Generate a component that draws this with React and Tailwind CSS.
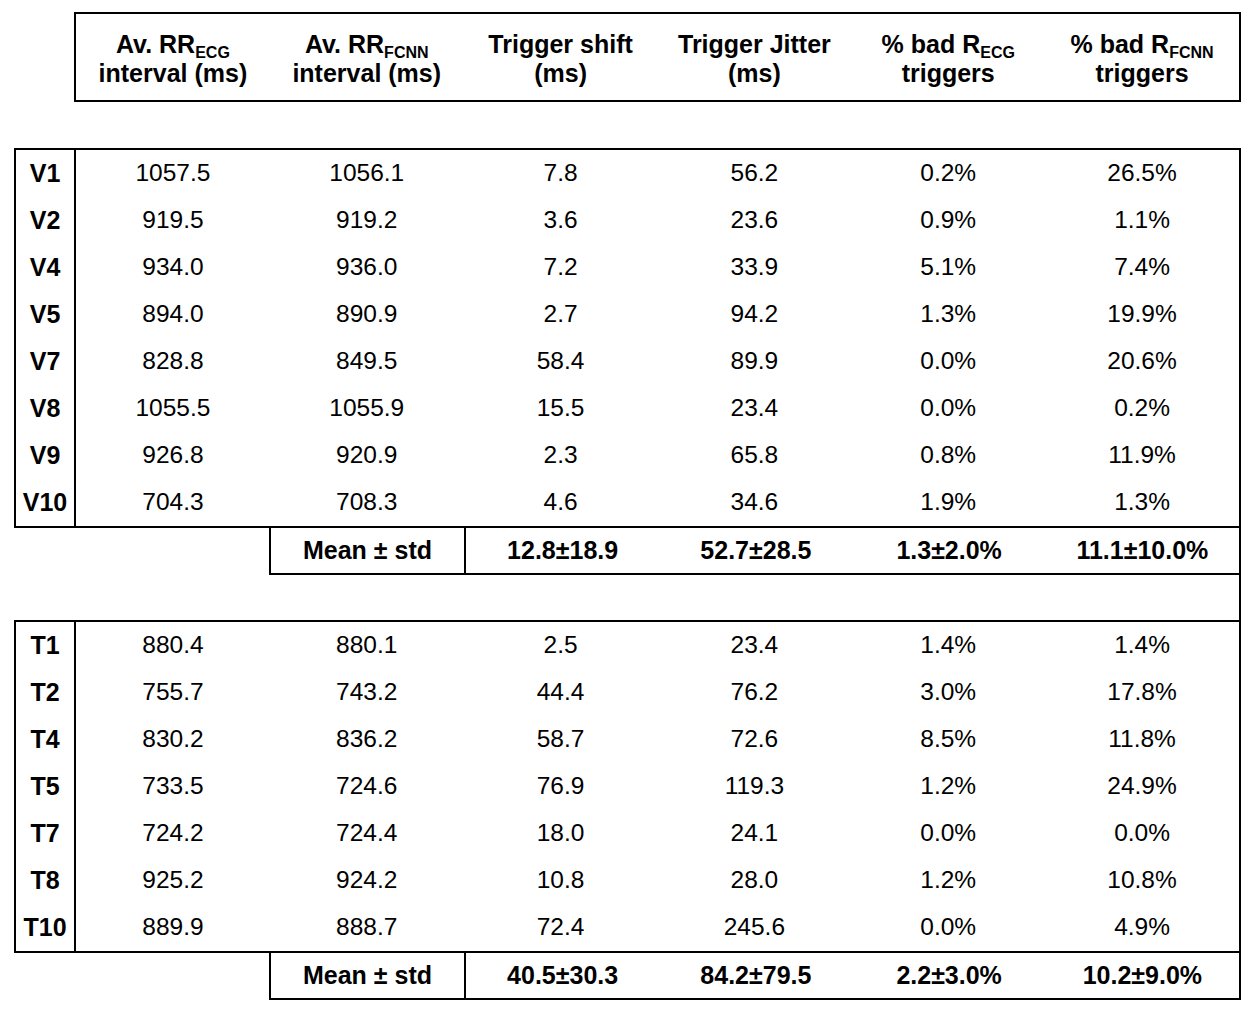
import React from "react";

const vRows = [
  ["V1", "1057.5", "1056.1", "7.8", "56.2", "0.2%", "26.5%"],
  ["V2", "919.5", "919.2", "3.6", "23.6", "0.9%", "1.1%"],
  ["V4", "934.0", "936.0", "7.2", "33.9", "5.1%", "7.4%"],
  ["V5", "894.0", "890.9", "2.7", "94.2", "1.3%", "19.9%"],
  ["V7", "828.8", "849.5", "58.4", "89.9", "0.0%", "20.6%"],
  ["V8", "1055.5", "1055.9", "15.5", "23.4", "0.0%", "0.2%"],
  ["V9", "926.8", "920.9", "2.3", "65.8", "0.8%", "11.9%"],
  ["V10", "704.3", "708.3", "4.6", "34.6", "1.9%", "1.3%"],
];

const tRows = [
  ["T1", "880.4", "880.1", "2.5", "23.4", "1.4%", "1.4%"],
  ["T2", "755.7", "743.2", "44.4", "76.2", "3.0%", "17.8%"],
  ["T4", "830.2", "836.2", "58.7", "72.6", "8.5%", "11.8%"],
  ["T5", "733.5", "724.6", "76.9", "119.3", "1.2%", "24.9%"],
  ["T7", "724.2", "724.4", "18.0", "24.1", "0.0%", "0.0%"],
  ["T8", "925.2", "924.2", "10.8", "28.0", "1.2%", "10.8%"],
  ["T10", "889.9", "888.7", "72.4", "245.6", "0.0%", "4.9%"],
];

function Sub({ children }) {
  return <span className="relative top-[5px] text-[16px] leading-none">{children}</span>;
}

function HeaderCell({ l1, l2 }) {
  return (
    <div className="flex flex-1 flex-col items-center justify-center pt-[4px] text-[25px] font-bold leading-[29.5px]">
      <div>{l1}</div>
      <div>{l2}</div>
    </div>
  );
}

function DataTable({ rows }) {
  return (
    <div className="ml-[14px] w-[1227px] border-2 border-black">
      {rows.map((r) => (
        <div key={r[0]} className="flex h-[47px] items-center">
          <div className="flex h-full w-[60px] items-center justify-center border-r-2 border-black text-[25px] font-bold">
            {r[0]}
          </div>
          {r.slice(1).map((v, i) => (
            <div key={i} className="flex flex-1 items-center justify-center text-[24.5px]">
              {v}
            </div>
          ))}
        </div>
      ))}
    </div>
  );
}

function MeanRow({ vals }) {
  return (
    <div className="ml-[14px] flex h-[47px] w-[1227px]">
      <div className="w-[255px]" />
      <div className="flex flex-1 border-x-2 border-b-2 border-black text-[25px] font-bold">
        <div className="flex w-[195px] items-center justify-center border-r-2 border-black">
          Mean ± std
        </div>
        {vals.map((v, i) => (
          <div key={i} className="flex flex-1 items-center justify-center">
            {v}
          </div>
        ))}
      </div>
    </div>
  );
}

export default function App() {
  return (
    <div className="h-[1014px] w-[1259px] bg-white pt-[12px] text-black font-['Liberation_Sans',Arial,sans-serif]">
      <div className="ml-[74px] flex h-[90px] w-[1167px] border-2 border-black">
        <HeaderCell l1={<>Av. RR<Sub>ECG</Sub></>} l2="interval (ms)" />
        <HeaderCell l1={<>Av. RR<Sub>FCNN</Sub></>} l2="interval (ms)" />
        <HeaderCell l1="Trigger shift" l2="(ms)" />
        <HeaderCell l1="Trigger Jitter" l2="(ms)" />
        <HeaderCell l1={<>% bad R<Sub>ECG</Sub></>} l2="triggers" />
        <HeaderCell l1={<>% bad R<Sub>FCNN</Sub></>} l2="triggers" />
      </div>
      <div className="h-[46px]" />
      <DataTable rows={vRows} />
      <MeanRow vals={["12.8±18.9", "52.7±28.5", "1.3±2.0%", "11.1±10.0%"]} />
      <div className="ml-[14px] flex h-[45px] w-[1227px] justify-end">
        <div className="w-[2px] bg-black" />
      </div>
      <DataTable rows={tRows} />
      <MeanRow vals={["40.5±30.3", "84.2±79.5", "2.2±3.0%", "10.2±9.0%"]} />
    </div>
  );
}
